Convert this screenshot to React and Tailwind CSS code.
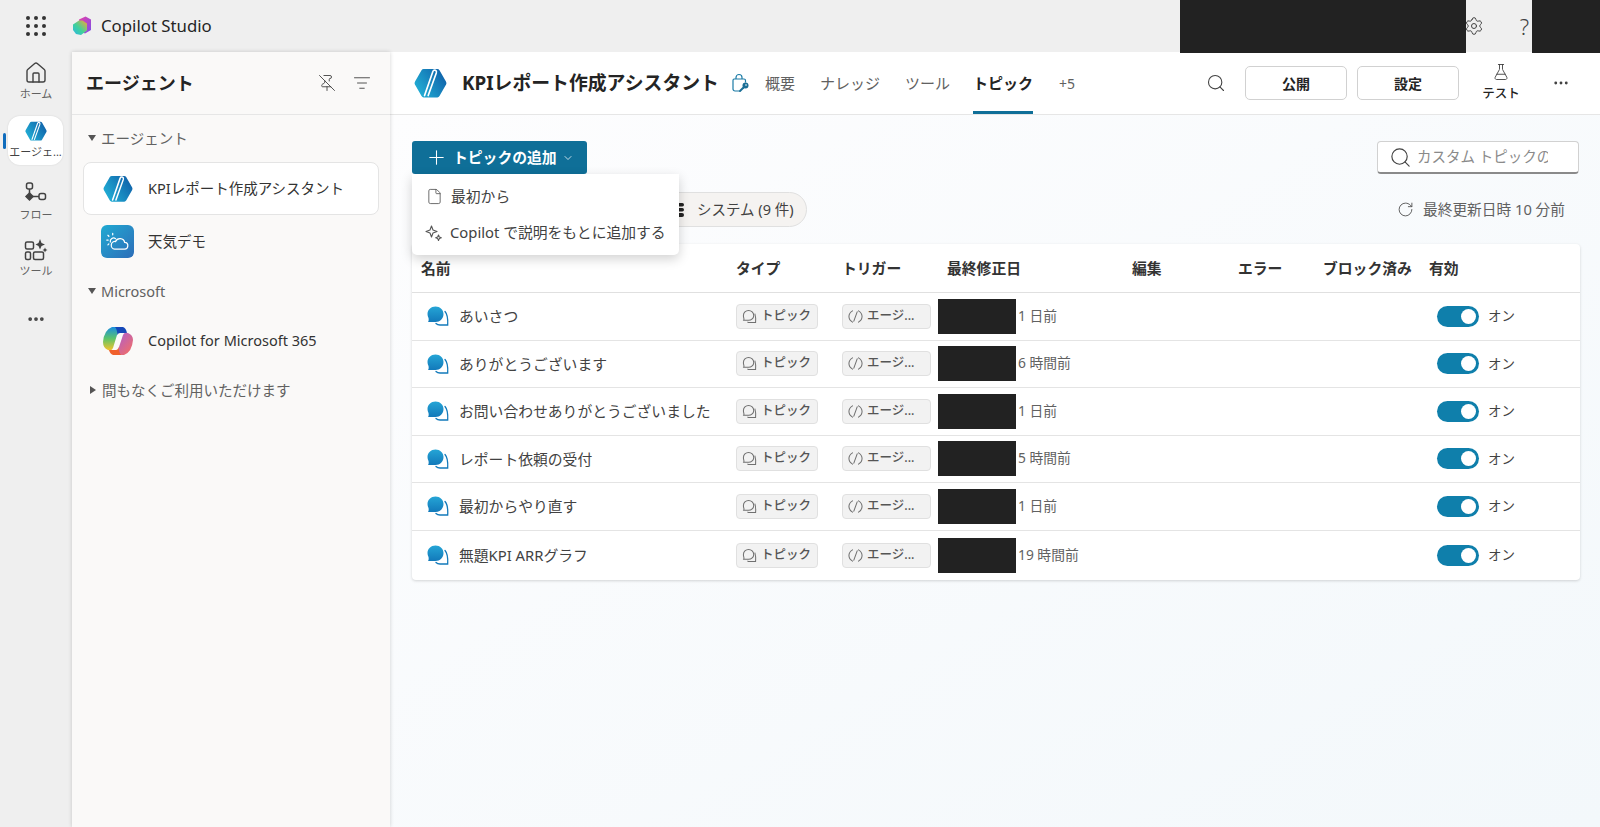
import React from 'react';
import { Home, PinOff, ListFilter, Search, Settings, FlaskConical, Ellipsis, RotateCw, File, Plus, ChevronDown } from 'lucide-react';

const rows = [
    { name: 'あいさつ', date: '1 日前' },
    { name: 'ありがとうございます', date: '6 時間前' },
    { name: 'お問い合わせありがとうございました', date: '1 日前' },
    { name: 'レポート依頼の受付', date: '5 時間前' },
    { name: '最初からやり直す', date: '1 日前' },
    { name: '無題KPI ARRグラフ', date: '19 時間前' },
];

const gridCols = 'grid grid-cols-[315px_106px_105px_185px_106px_85px_106px_1fr] pl-[9px]';

function AgentLogo({ size = 32, id = 'a' }) {
    return (
        <svg width={size} height={size * 0.92} viewBox="0 0 36 33">
            <defs>
                <linearGradient id={id} x1="0" y1="0.8" x2="1" y2="0.2">
                    <stop offset="0" stopColor="#22b3d8" />
                    <stop offset="1" stopColor="#0f5fa8" />
                </linearGradient>
            </defs>
            <path d="M10.500 1 H25.500 Q27 1 27.800 2.400 L35 15 Q35.800 16.500 35 18 L27.800 30.600 Q27 32 25.500 32 H10.500 Q9 32 8.200 30.600 L1 18 Q.2 16.500 1 15 L8.200 2.400 Q9 1 10.500 1Z" fill={`url(#${id})`} />
            <path d="M11.500 30 L20.500 4 Q21.500 1.500 23.500 2.500 Q25 3.300 24.300 5.500 L15.500 30" fill="none" stroke="#fff" strokeWidth="1.800" strokeLinecap="round" />
        </svg>
    );
}

function StudioLogo() {
    return (
        <svg width="20" height="20" viewBox="0 0 20 20">
            <defs>
                <linearGradient id="st1" x1="0" y1="1" x2="1" y2="0">
                    <stop offset="0" stopColor="#2bb5e8" />
                    <stop offset=".45" stopColor="#3fd29a" />
                    <stop offset="1" stopColor="#f5a53a" />
                </linearGradient>
                <linearGradient id="st2" x1="0" y1="0" x2="1" y2="1">
                    <stop offset="0" stopColor="#e83fa8" />
                    <stop offset="1" stopColor="#7a4fe8" />
                </linearGradient>
            </defs>
            <path d="M7 3.500 L13.500 .5 L19 3.500 V14 L13 17.500 L8 15Z" fill="url(#st2)" />
            <path d="M7 4.500 H10.500 L15 7.500 V14.500 L9 19 L4 18 L1 14 V8.500Z" fill="url(#st1)" />
        </svg>
    );
}

function CopilotLogo() {
    return (
        <svg width="32" height="30" viewBox="0 0 32 30">
            <defs>
                <linearGradient id="cp1" x1="0" y1="0" x2="0" y2="1">
                    <stop offset="0" stopColor="#1a8fe0" />
                    <stop offset=".5" stopColor="#5cc46a" />
                    <stop offset="1" stopColor="#f5c32c" />
                </linearGradient>
                <linearGradient id="cp2" x1="0" y1="0" x2="1" y2="1">
                    <stop offset="0" stopColor="#a25be0" />
                    <stop offset="1" stopColor="#f9705c" />
                </linearGradient>
            </defs>
            <path d="M10 1 H21 Q17 3 15 9 L11 22 Q10 25 6 24 Q1 22 1 16 Q2 4 10 1Z" fill="url(#cp1)" />
            <path d="M13 1 H21 Q24 2 25 7 L18 7 Q16 7 15.500 9 Q15 3 13 1Z" fill="#1548b8" />
            <path d="M22 29 H11 Q15 27 17 21 L21 9 Q22 6 26 7 Q31 9 31 14 Q30 26 22 29Z" fill="url(#cp2)" />
            <path d="M19 29 H11 Q8 28 7 24 L14 24 Q16 24 16.500 21 Q17 27 19 29Z" fill="#f0602c" />
        </svg>
    );
}

function WeatherTile() {
    return (
        <div className="w-[33px] h-[33px] rounded-md bg-gradient-to-br from-[#1eaad2] to-[#2c6db8] flex items-center justify-center">
            <svg width="23" height="20" viewBox="0 0 24 20" fill="none" stroke="#fff" strokeWidth="1.300" strokeLinecap="round">
                <path d="M9 17.500 H19 a3.500 3.500 0 0 0 .5-7 a5 5 0 0 0-9.500-1 a4 4 0 0 0-1 8Z" />
                <path d="M10 6.500 a3.500 3.500 0 0 0-5.500 3.500 M7 1 V2.500 M2 3 L3 4 M.8 8 H2.300 M2 13 L3 12" />
            </svg>
        </div>
    );
}

function FlowIcon() {
    return (
        <svg width="24" height="24" viewBox="0 0 24 24" fill="none" stroke="#424242" strokeWidth="1.500">
            <rect x="2.500" y="1" width="6" height="6" rx="2" />
            <path d="M5.500 7 V11" />
            <path d="M5.500 11 L9 14.500 L5.500 18 L2 14.500Z" fill="#424242" />
            <path d="M9 14.500 H15" />
            <rect x="15" y="11.500" width="6.500" height="6" rx="2" />
        </svg>
    );
}

function ToolsIcon() {
    return (
        <svg width="24" height="24" viewBox="0 0 24 24" fill="none" stroke="#424242" strokeWidth="1.500">
            <rect x="1.500" y="4" width="8" height="7" rx="1.500" />
            <rect x="1.500" y="14" width="5" height="7.500" rx="1.500" />
            <rect x="9.500" y="14" width="10" height="7.500" rx="1.500" />
            <path d="M16 1 L17.500 5 L21 6.500 L17.500 8 L16 11.500 L14.500 8 L11.500 6.500 L14.500 5Z" fill="#424242" stroke="none" />
            <path d="M21 9.500 L21.800 11.200 L23.500 12 L21.800 12.800 L21 14.500 L20.200 12.800 L18.500 12 L20.200 11.200Z" fill="#424242" stroke="none" />
        </svg>
    );
}

function BubbleIcon() {
    return (
        <svg width="22" height="20" viewBox="0 0 22 20">
            <defs>
                <linearGradient id="bb" x1="0" y1="0" x2="0" y2="1">
                    <stop offset="0" stopColor="#25a5d6" />
                    <stop offset="1" stopColor="#1279ba" />
                </linearGradient>
            </defs>
            <path d="M8.500 .5 C13 .5 16.500 3.800 16.500 8 C16.500 12.500 13 16 8.500 16 H1 C1.800 15 1.800 13.500 1.500 12 C.8 10.800 .5 9.500 .5 8 C.5 3.800 4 .5 8.500 .5Z" fill="url(#bb)" />
            <path d="M18 5.500 C20.300 8 21 13 20.700 19 H13 C11.500 19 10 18.500 9 17.500" fill="none" stroke="#1279ba" strokeWidth="1.300" strokeLinecap="round" />
        </svg>
    );
}

function ChatOutline() {
    return (
        <svg width="15" height="15" viewBox="0 0 16 16" fill="none" stroke="#707070" strokeWidth="1.100">
            <path d="M7 1.500 C10 1.500 12.500 3.800 12.500 6.800 C12.500 9.800 10 12 7 12 H1.800 C2.200 11.300 2.200 10.500 1.900 9.500 C1.600 8.800 1.500 7.800 1.500 6.800 C1.500 3.800 4 1.500 7 1.500Z" />
            <path d="M13.700 5 C14.500 7.500 14.800 10.500 14.500 14.500 H8 C7 14.500 6.300 14.200 5.800 13.700" />
        </svg>
    );
}

function TriggerIcon() {
    return (
        <svg width="15" height="15" viewBox="0 0 16 16" fill="none" stroke="#707070" strokeWidth="1.100" strokeLinecap="round" strokeLinejoin="round">
            <path d="M4.800 2 C2.300 3.500 1 6 1 8 C1 10 2.300 12.500 4.800 14 M11.200 2 C13.700 3.500 15 6 15 8 C15 10 13.700 12.500 11.200 14 M9.800 3 L6.200 13" />
        </svg>
    );
}

function Sparkle() {
    return (
        <svg width="18" height="18" viewBox="0 0 18 18" fill="none" stroke="#555" strokeWidth="1.100" strokeLinejoin="round">
            <path d="M6.500 2 L8 6 L12 7.500 L8 9 L6.500 13 L5 9 L1 7.500 L5 6Z" />
            <path d="M13.500 11 L14.300 13 L16.300 13.800 L14.300 14.600 L13.500 16.500 L12.700 14.600 L10.700 13.800 L12.700 13Z" />
        </svg>
    );
}

function BagKey() {
    return (
        <svg width="20" height="20" viewBox="0 0 20 20" fill="none">
            <path d="M6 6 V4.500 a3 3 0 0 1 6 0 V6 M4 6 H14 a1.500 1.500 0 0 1 1.500 1.500 V9 M9 18 H5 a2 2 0 0 1-2-2 V7.500 A1.500 1.500 0 0 1 4 6" stroke="#1b7ba6" strokeWidth="1.200" strokeLinecap="round" />
            <circle cx="15.500" cy="12.500" r="3" fill="#1b6f96" />
            <path d="M13.500 14.500 L10 18" stroke="#1b6f96" strokeWidth="2" strokeLinecap="round" />
            <circle cx="16" cy="12" r=".8" fill="#fff" />
        </svg>
    );
}

function SideSection({ open = true, children }) {
    return (
        <div className="flex items-center gap-[3px] pl-[16px] text-[14.500px] leading-5 text-[#616161]">
            <span className={`w-0 h-0 border-solid ${open ? 'border-x-[4.500px] border-x-transparent border-t-[6px] border-t-[#555]' : 'ml-[2px] mr-[1px] border-y-[4.500px] border-y-transparent border-l-[6px] border-l-[#555]'}`}></span>
            <span className="ml-[2px]">{children}</span>
        </div>
    );
}

function RailItem({ icon, label }) {
    return (
        <div className="flex flex-col items-center h-[48px] justify-center gap-[1px]">
            {icon}
            <span className="text-[11px] leading-4 text-[#616161]">{label}</span>
        </div>
    );
}

export default function App() {
    return (
        <div className="h-[827px] w-[1600px] flex flex-col overflow-hidden bg-[#efefef] font-['Noto_Sans','Noto_Sans_CJK_JP',sans-serif] text-[#242424]">
            {/* top bar */}
            <header className="h-[52px] flex items-center shrink-0 relative">
                <div className="w-[72px] flex justify-center">
                    <div className="grid grid-cols-3 gap-[4.500px]">
                        {Array.from({ length: 9 }).map((_, i) => (
                            <span key={i} className="w-[3.500px] h-[3.500px] rounded-full bg-[#333]"></span>
                        ))}
                    </div>
                </div>
                <StudioLogo />
                <span className="ml-[9px] text-[16.800px] font-normal text-[#242424]">Copilot Studio</span>
                <div className="ml-auto flex items-center h-full pr-[71px]">
                    <Settings size={20} strokeWidth={1.200} className="mr-[36px] text-[#424242]" />
                    <span className="text-[22px] font-light text-[#424242]">?</span>
                </div>
                <div className="absolute left-[1180px] top-0 w-[286px] h-[53px] bg-[#222] z-20"></div>
                <div className="absolute left-[1532px] top-0 w-[68px] h-[53px] bg-[#222] z-20"></div>
            </header>

            <div className="flex flex-1 min-h-0">
                {/* icon rail */}
                <nav className="w-[72px] shrink-0 flex flex-col items-center relative">
                    <div className="mt-[5px]">
                        <RailItem icon={<Home size={24} strokeWidth={1.400} className="text-[#424242]" />} label="ホーム" />
                    </div>
                    <div className="relative mt-[11px] w-[55px] h-[49px] ml-[-1px] bg-white rounded-xl flex flex-col items-center justify-center shadow-[0_0_2px_rgba(0,0,0,0.12)]">
                        <AgentLogo size={22} id="rail" />
                        <span className="text-[11px] leading-4 mt-[2px] text-[#424242]">エージェ...</span>
                        <span className="absolute left-[-5px] top-[17px] w-[3px] h-[16px] rounded-sm bg-[#0f6cbd]"></span>
                    </div>
                    <div className="mt-[13px]">
                        <RailItem icon={<FlowIcon />} label="フロー" />
                    </div>
                    <div className="mt-[8px]">
                        <RailItem icon={<ToolsIcon />} label="ツール" />
                    </div>
                    <Ellipsis size={20} strokeWidth={2.500} className="mt-[27px] text-[#424242]" />
                </nav>

                {/* agents panel */}
                <aside className="w-[318px] shrink-0 bg-[#faf9f8] shadow-[0_0_4px_rgba(0,0,0,0.18)] z-10 flex flex-col">
                    <div className="h-[63px] shrink-0 border-b border-[#e6e6e6] flex items-center pl-[14px] pr-[19px]">
                        <span className="text-[18px] font-bold">エージェント</span>
                        <PinOff size={18} strokeWidth={1.200} className="ml-auto text-[#424242]" />
                        <ListFilter size={18} strokeWidth={1.200} className="ml-[17px] text-[#424242]" />
                    </div>
                    <div className="pt-[13px]">
                        <SideSection>エージェント</SideSection>
                        <div className="mt-[14px] ml-[11px] w-[296px] h-[53px] bg-white border border-[#e4e4e4] rounded-lg flex items-center pl-[19px]">
                            <AgentLogo size={30} id="side" />
                            <span className="ml-[15px] text-[14.500px] text-[#333]">KPIレポート作成アシスタント</span>
                        </div>
                        <div className="mt-[10px] flex items-center pl-[29px] h-[33px]">
                            <WeatherTile />
                            <span className="ml-[14px] text-[14.500px] text-[#333]">天気デモ</span>
                        </div>
                        <div className="mt-[23px]">
                            <SideSection>Microsoft</SideSection>
                        </div>
                        <div className="mt-[25px] flex items-center pl-[30px] h-[30px]">
                            <CopilotLogo />
                            <span className="ml-[14px] text-[14.500px] text-[#333]">Copilot for Microsoft 365</span>
                        </div>
                        <div className="mt-[24px]">
                            <SideSection open={false}>間もなくご利用いただけます</SideSection>
                        </div>
                    </div>
                </aside>

                {/* main */}
                <main className="flex-1 min-w-0 flex flex-col bg-white">
                    <div className="h-[63px] shrink-0 border-b border-[#e6e6e6] flex items-center pl-[24px] relative">
                        <AgentLogo size={33} id="main" />
                        <span className="ml-[15px] text-[18.850px] font-bold whitespace-nowrap">KPIレポート作成アシスタント</span>
                        <span className="ml-[11px]"><BagKey /></span>
                        <div className="ml-[15px] flex items-center gap-[25px] h-full text-[15px] text-[#616161]">
                            <span>概要</span>
                            <span>ナレッジ</span>
                            <span>ツール</span>
                            <span className="relative h-full flex items-center -ml-[2px] font-bold text-[#242424]">
                                トピック
                                <span className="absolute left-0 right-0 bottom-0 h-[3px] bg-[#0f6f98]"></span>
                            </span>
                            <span className="text-[14px] ml-[1px]">+5</span>
                        </div>
                        <div className="ml-auto flex items-center pr-[30px]">
                            <Search size={20} strokeWidth={1.300} className="text-[#424242] mr-[19px]" />
                            <button className="w-[102px] h-[34px] border border-[#d1d1d1] rounded-[5px] bg-white text-[14px] font-bold">公開</button>
                            <button className="ml-[10px] w-[102px] h-[34px] border border-[#d1d1d1] rounded-[5px] bg-white text-[14px] font-bold">設定</button>
                            <div className="ml-[17px] w-[50px] flex flex-col items-center">
                                <FlaskConical size={18} strokeWidth={1.200} className="text-[#424242] -mt-[2px]" />
                                <span className="mt-[5px] text-[12.500px] font-medium leading-4">テスト</span>
                            </div>
                            <Ellipsis size={18} strokeWidth={1.800} className="ml-[26px] text-[#424242]" />
                        </div>
                    </div>

                    <div className="flex-1 pl-[22px] pr-[21px] pt-[26px] bg-gradient-to-br from-[#fdfdfe] to-[#f3f8fb]">
                        <div className="flex items-start justify-between h-[33px]">
                            <div className="relative">
                                <button className="w-[175px] h-[33px] rounded-[3px] bg-[#0f6f98] text-white flex items-center pl-[13px] text-[14.800px] font-bold">
                                    <Plus size={23} strokeWidth={1.100} />
                                    <span className="ml-[5px] whitespace-nowrap">トピックの追加</span>
                                    <ChevronDown size={12} strokeWidth={1.500} className="ml-[5px]" />
                                </button>
                                <div className="absolute left-0 top-[33px] z-20 w-[267px] h-[81px] bg-white rounded-b-[5px] shadow-[0_4px_12px_rgba(0,0,0,0.18)] flex flex-col justify-center gap-[13px] text-[14.800px] text-[#424242]">
                                    <div className="flex items-center h-[23px] pl-[14px]">
                                        <File size={17} strokeWidth={1.200} className="text-[#555]" />
                                        <span className="ml-[8px]">最初から</span>
                                    </div>
                                    <div className="flex items-center h-[23px] pl-[13px]">
                                        <Sparkle />
                                        <span className="ml-[7px] whitespace-nowrap">Copilot で説明をもとに追加する</span>
                                    </div>
                                </div>
                            </div>
                            <div className="w-[202px] h-[33px] rounded-[4px] border border-[#d1d1d1] border-b-[2px] border-b-[#8a8a8a] bg-white flex items-center pl-[11px]">
                                <Search size={23} strokeWidth={1.200} className="text-[#424242] shrink-0" />
                                <input readOnly placeholder="カスタム トピックの検索" className="ml-[5px] w-[131px] bg-transparent outline-none text-[14.500px] placeholder:text-[#8a8a8a]" />
                            </div>
                        </div>

                        <div className="mt-[18px] h-[35px] flex items-center justify-between">
                            <div className="ml-[170px] w-[225px] h-[35px] rounded-full border border-[#e0e0e0] bg-[#f5f3f1] flex items-center text-[14.500px] text-[#424242] whitespace-nowrap">
                                <svg width="16" height="14" viewBox="0 0 16 14" className="ml-[85px] mr-[13px]" fill="#222">
                                    <rect x="0" y="0" width="16" height="3.500" rx="1.700" />
                                    <rect x="2" y="5" width="14" height="3.500" rx="1.700" />
                                    <rect x="0" y="10" width="16" height="4" rx="2" />
                                </svg>
                                システム (9 件)
                            </div>
                            <div className="flex items-center text-[14.700px] text-[#616161] pr-[14px]">
                                <RotateCw size={17} strokeWidth={1.300} className="mr-[9px] text-[#555]" />
                                最終更新日時 10 分前
                            </div>
                        </div>

                        <div className="mt-[17px] w-[1168px] bg-white rounded-[4px] shadow-[0_1px_3px_rgba(0,0,0,0.16)]">
                            <div className={`${gridCols} h-[49px] items-center text-[14.800px] font-semibold text-[#333] border-b border-[#e0e0e0]`}>
                                <span>名前</span>
                                <span>タイプ</span>
                                <span>トリガー</span>
                                <span>最終修正日</span>
                                <span>編集</span>
                                <span>エラー</span>
                                <span className="whitespace-nowrap">ブロック済み</span>
                                <span>有効</span>
                            </div>
                            {rows.map((row, i) => (
                                <div key={i} className={`${gridCols} items-center text-[14.800px] text-[#424242] ${i < rows.length - 1 ? 'h-[47.500px] border-b border-[#e4e4e4]' : 'h-[49.500px]'}`}>
                                    <div className="flex items-center pl-[6px]">
                                        <BubbleIcon />
                                        <span className="ml-[10px] whitespace-nowrap">{row.name}</span>
                                    </div>
                                    <div>
                                        <span className="w-[82px] h-[25px] rounded-[4px] border border-[#e0e0e0] bg-[#f2f2f2] flex items-center pl-[5px] text-[12.500px] font-medium text-[#555]">
                                            <ChatOutline />
                                            <span className="ml-[4px]">トピック</span>
                                        </span>
                                    </div>
                                    <div>
                                        <span className="w-[89px] h-[25px] rounded-[4px] border border-[#e0e0e0] bg-[#f2f2f2] flex items-center pl-[5px] text-[12.500px] font-medium text-[#555]">
                                            <TriggerIcon />
                                            <span className="ml-[4px] whitespace-nowrap">エージ...</span>
                                        </span>
                                    </div>
                                    <div className="flex items-center -ml-[9px] text-[13.800px] text-[#616161] col-span-2">
                                        <span className="w-[78px] h-[35px] bg-[#222] shrink-0"></span>
                                        <span className="ml-[2px] whitespace-nowrap">{row.date}</span>
                                    </div>
                                    <div></div>
                                    <div></div>
                                    <div className="flex items-center ml-[8px]">
                                        <span className="w-[42px] h-[21px] rounded-full bg-[#0f7fab] flex items-center justify-end pr-[3px]">
                                            <span className="w-[15px] h-[15px] rounded-full bg-white"></span>
                                        </span>
                                        <span className="ml-[9px] text-[13.500px] whitespace-nowrap">オン</span>
                                    </div>
                                </div>
                            ))}
                        </div>
                    </div>
                </main>
            </div>
        </div>
    );
}
